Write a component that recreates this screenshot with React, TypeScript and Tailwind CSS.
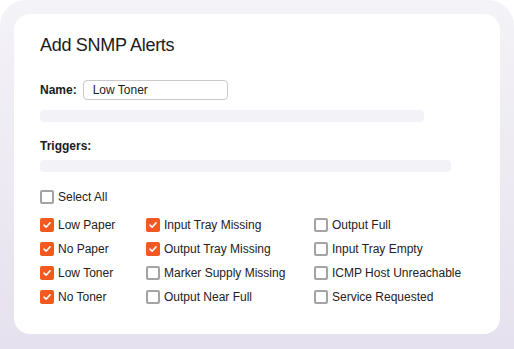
import React, { useState } from "react";

type Trigger = { label: string; checked: boolean };

const columns: Trigger[][] = [
  [
    { label: "Low Paper", checked: true },
    { label: "No Paper", checked: true },
    { label: "Low Toner", checked: true },
    { label: "No Toner", checked: true },
  ],
  [
    { label: "Input Tray Missing", checked: true },
    { label: "Output Tray Missing", checked: true },
    { label: "Marker Supply Missing", checked: false },
    { label: "Output Near Full", checked: false },
  ],
  [
    { label: "Output Full", checked: false },
    { label: "Input Tray Empty", checked: false },
    { label: "ICMP Host Unreachable", checked: false },
    { label: "Service Requested", checked: false },
  ],
];

const colWidths = ["w-[106px]", "w-[168px]", "w-[150px]"];

const Box: React.FC<{ checked: boolean }> = ({ checked }) =>
  checked ? (
    <span className="flex items-center justify-center w-[14px] h-[14px] rounded-[2px] bg-[#f2581f]">
      <svg width="10" height="10" viewBox="0 0 10 10" fill="none">
        <path d="M2 5.2 L4.1 7.2 L8 2.9" stroke="#fff" strokeWidth="1.6" strokeLinecap="round" strokeLinejoin="round" />
      </svg>
    </span>
  ) : (
    <span className="block w-[14px] h-[14px] rounded-[2px] border-2 border-[#a3a3a3] bg-white" />
  );

const CheckRow: React.FC<{ label: string; checked: boolean; onToggle: () => void }> = ({ label, checked, onToggle }) => (
  <label className="flex items-center gap-[4px] h-[24px] cursor-pointer whitespace-nowrap" onClick={onToggle}>
    <Box checked={checked} />
    <span className="text-[12px] text-[#222]">{label}</span>
  </label>
);

export default function App() {
  const [name, setName] = useState("Low Toner");
  const [state, setState] = useState(columns);
  const [all, setAll] = useState(false);

  const toggle = (c: number, r: number) => {
    setState((prev) =>
      prev.map((col, ci) => col.map((t, ri) => (ci === c && ri === r ? { ...t, checked: !t.checked } : t)))
    );
  };

  return (
    <div className="w-[514px] h-[349px] overflow-hidden bg-white" style={{ fontFamily: '"Liberation Sans", Arial, sans-serif' }}>
      <div className="w-full h-full rounded-t-[26px] bg-gradient-to-b from-[#f4f3f7] to-[#e6e1ee] pt-[14px] px-[14px] pb-[15px]">
        <div className="w-full h-full bg-white rounded-[16px] pt-[20px] px-[26px]">
          {/* Title */}
          <h1 className="text-[18px] leading-[22px] tracking-[-0.3px] text-[#1b1b1b]">Add SNMP Alerts</h1>

          {/* Name */}
          <div className="flex items-center gap-[6px] mt-[24px]">
            <span className="text-[12px] font-bold text-[#1b1b1b]">Name:</span>
            <input
              value={name}
              onChange={(e) => setName(e.target.value)}
              className="w-[145px] h-[20px] border border-[#c9c9cc] rounded-[4px] px-[9px] text-[12px] text-[#222] outline-none"
            />
          </div>
          <div className="w-[384px] h-[12px] mt-[10px] rounded-[4px] bg-[#f3f2f7]" />

          {/* Triggers */}
          <div className="mt-[16px] text-[12px] leading-[16px] font-bold text-[#1b1b1b]">Triggers:</div>
          <div className="w-[411px] h-[12px] mt-[6px] rounded-[4px] bg-[#f3f2f7]" />

          <div className="mt-[13px]">
            <CheckRow label="Select All" checked={all} onToggle={() => setAll(!all)} />
          </div>

          <div className="flex mt-[4px]">
            {state.map((col, ci) => (
              <div key={ci} className={`flex flex-col shrink-0 ${colWidths[ci]}`}>
                {col.map((t, ri) => (
                  <CheckRow key={t.label} label={t.label} checked={t.checked} onToggle={() => toggle(ci, ri)} />
                ))}
              </div>
            ))}
          </div>
        </div>
      </div>
    </div>
  );
}
